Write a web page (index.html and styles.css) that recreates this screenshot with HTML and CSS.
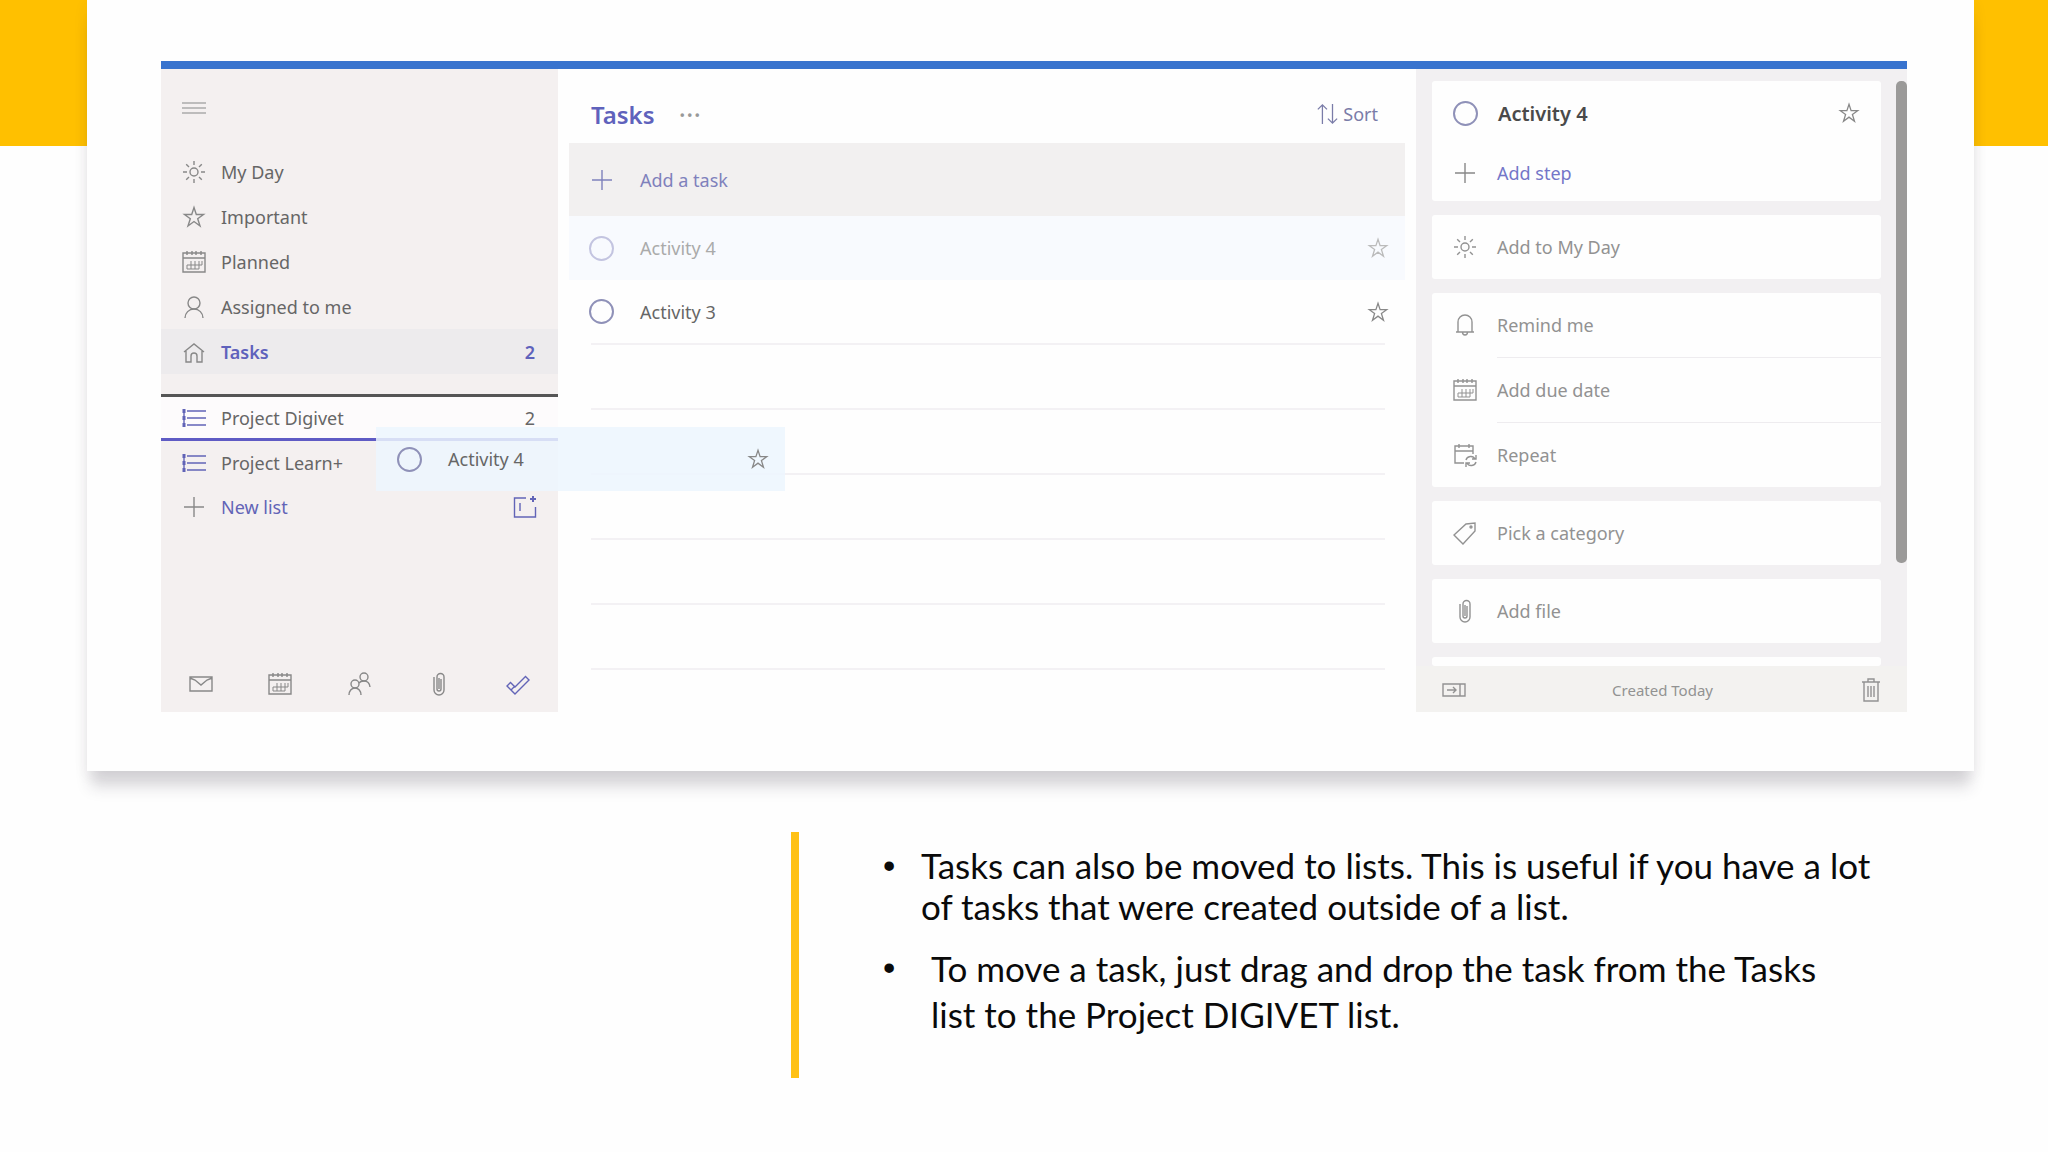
FILE: index.html
```html
<!DOCTYPE html>
<html lang="en">
<head>
    <meta charset="UTF-8">
    <meta name="viewport" content="width=device-width, initial-scale=1.0">
    <title>Moving tasks to a list</title>
    <link rel="stylesheet" href="styles.css">
</head>
<body>
    <svg class="symbols" aria-hidden="true">
        <symbol id="menu" viewBox="0 0 24 24"><path d="M0 7h24M0 12h24M0 17h24"/></symbol>
        <symbol id="sun" viewBox="0 0 24 24"><circle cx="12" cy="12" r="4"/><path d="M12 1v4M12 19v4M1 12h4M19 12h4M4.2 4.2L7 7M17 17l2.8 2.8M4.2 19.8L7 17M17 7l2.8-2.8"/></symbol>
        <symbol id="star" viewBox="0 0 24 24"><path d="M12 2.5l2.3 7h7.2l-5.8 4.2 2.3 7.3-6-4.5L6 21l2.3-7.3-5.8-4.2h7.2z"/></symbol>
        <symbol id="calendar" viewBox="0 0 24 24"><path d="M1 3h22v19H1zM1 8h22M5 1v4M10 1v4M14 1v4M19 1v4"/><path d="M5 15v4M9 11v8M13 11v8M17 11v8M20 11v4M5 15h15M5 19h12" stroke-width="1"/></symbol>
        <symbol id="person" viewBox="0 0 24 24"><circle cx="12" cy="8" r="6"/><path d="M3 23c0-5 4-9 9-9s9 4 9 9"/></symbol>
        <symbol id="home" viewBox="0 0 24 24"><path d="M2 12L12 4l10 8M4 11v11h5v-6a3 3 0 0 1 6 0v6h5V11"/></symbol>
        <symbol id="list" viewBox="0 0 24 24"><path d="M5 5h19M5 12h19M5 19h19"/><path d="M2 3v18" stroke-width="3" stroke-dasharray="4 3"/><path d="M2 3v18"/></symbol>
        <symbol id="plus" viewBox="0 0 24 24"><path d="M12 2v20M2 12h20"/></symbol>
        <symbol id="group" viewBox="0 0 24 24"><path d="M13 3H1.500v19h21V12M7 8v8"/><path d="M20 1v6M17 4h6" stroke-width="2"/></symbol>
        <symbol id="mail" viewBox="0 0 24 24"><path d="M1 5h22v14H1zM1 6l5 2 6 5 6-5 5-2"/></symbol>
        <symbol id="people" viewBox="0 0 24 24"><circle cx="7" cy="12" r="4"/><path d="M1 23c0-4 2.500-7 6-7s6 3 6 7"/><circle cx="16" cy="5" r="4"/><path d="M11 11c1-1.500 3-2 5-2 3.500 0 5.500 2 6 6"/></symbol>
        <symbol id="clip" viewBox="0 0 24 24"><path d="M14 7v10a2 2 0 0 1-4 0V5a3.500 3.500 0 0 1 7 0v13a5 5 0 0 1-10 0V5M12 6v11"/></symbol>
        <symbol id="check" viewBox="0 0 24 24"><path d="M1 14l3.500-3.500L9 15 19.500 4.500 23 8 9 22zM5 18l4-4"/></symbol>
        <symbol id="sort" viewBox="0 0 24 24"><path d="M7 23V2M2 7l5-5 5 5M18 1v21M13 17l5 5 5-5"/></symbol>
        <symbol id="bell" viewBox="0 0 24 24"><path d="M3 19h18M5 19V9a7 7 0 0 1 14 0v10M9.500 19a2.500 3 0 0 0 5 0"/></symbol>
        <symbol id="repeat" viewBox="0 0 24 24"><path d="M11 20H2V3h18v8M2 8h18M6 1v4M16 1v4"/><path d="M13 17c1-4 7-5 9-1M23 12v4h-4M23 19c-1 4-7 5-9 1M13 24v-4h4"/></symbol>
        <symbol id="tag" viewBox="0 0 24 24"><path d="M13 3l9-1v8L10 23 1 14z"/><circle cx="18" cy="6" r="1"/></symbol>
        <symbol id="hide" viewBox="0 0 24 24"><path d="M1 6h22v12H1zM18 6v12M5 12h9M11 9l3 3-3 3"/></symbol>
        <symbol id="trash" viewBox="0 0 24 24"><path d="M3 4h18M9 4V1h6v3M5 4v19h14V4M9 8v11M12 8v11M15 8v11"/></symbol>
    </svg>

    <section class="card">
        <div class="app">
            <nav class="sidebar">
                <button class="menu" aria-label="Menu"><svg class="icon"><use href="#menu"/></svg></button>
                <a class="nav-item" href="#"><svg class="icon"><use href="#sun"/></svg>My Day</a>
                <a class="nav-item" href="#"><svg class="icon"><use href="#star"/></svg>Important</a>
                <a class="nav-item" href="#"><svg class="icon"><use href="#calendar"/></svg>Planned</a>
                <a class="nav-item" href="#"><svg class="icon"><use href="#person"/></svg>Assigned to me</a>
                <a class="nav-item active" href="#"><svg class="icon"><use href="#home"/></svg>Tasks<span class="count">2</span></a>
                <div class="lists">
                    <a class="nav-item drop" href="#"><svg class="icon blue"><use href="#list"/></svg>Project Digivet<span class="count">2</span></a>
                    <a class="nav-item" href="#"><svg class="icon blue"><use href="#list"/></svg>Project Learn+</a>
                    <div class="new-list">
                        <button class="nav-item"><svg class="icon"><use href="#plus"/></svg>New list</button>
                        <button class="new-group" aria-label="New group"><svg class="icon blue"><use href="#group"/></svg></button>
                    </div>
                </div>
                <div class="switcher">
                    <a href="#" aria-label="Mail"><svg class="icon"><use href="#mail"/></svg></a>
                    <a href="#" aria-label="Calendar"><svg class="icon"><use href="#calendar"/></svg></a>
                    <a href="#" aria-label="People"><svg class="icon"><use href="#people"/></svg></a>
                    <a href="#" aria-label="Files"><svg class="icon"><use href="#clip"/></svg></a>
                    <a href="#" aria-label="To Do"><svg class="icon blue"><use href="#check"/></svg></a>
                </div>
            </nav>

            <main class="tasks">
                <header class="tasks-header">
                    <h1>Tasks</h1>
                    <button class="more" aria-label="More options">&middot;&middot;&middot;</button>
                    <button class="sort"><svg class="icon"><use href="#sort"/></svg>Sort</button>
                </header>
                <button class="add-task"><svg class="icon"><use href="#plus"/></svg>Add a task</button>
                <div class="task dragging">
                    <input type="checkbox" id="task4"><label for="task4">Activity 4</label>
                    <button class="fav" aria-label="Mark as important"><svg class="icon"><use href="#star"/></svg></button>
                </div>
                <div class="task">
                    <input type="checkbox" id="task3"><label for="task3">Activity 3</label>
                    <button class="fav" aria-label="Mark as important"><svg class="icon"><use href="#star"/></svg></button>
                </div>
                <div class="line"></div>
                <div class="line"></div>
                <div class="line"></div>
                <div class="line"></div>
                <div class="line"></div>
            </main>

            <aside class="detail">
                <div class="detail-scroll">
                    <div class="panels">
                        <div class="panel first">
                            <div class="row title">
                                <input type="checkbox" id="detail4"><label for="detail4">Activity 4</label>
                                <button class="fav" aria-label="Mark as important"><svg class="icon"><use href="#star"/></svg></button>
                            </div>
                            <button class="row step"><svg class="icon"><use href="#plus"/></svg>Add step</button>
                        </div>
                        <div class="panel"><button class="row"><svg class="icon"><use href="#sun"/></svg>Add to My Day</button></div>
                        <div class="panel">
                            <button class="row"><svg class="icon"><use href="#bell"/></svg>Remind me</button>
                            <hr>
                            <button class="row"><svg class="icon"><use href="#calendar"/></svg>Add due date</button>
                            <hr>
                            <button class="row"><svg class="icon"><use href="#repeat"/></svg>Repeat</button>
                        </div>
                        <div class="panel"><button class="row"><svg class="icon"><use href="#tag"/></svg>Pick a category</button></div>
                        <div class="panel"><button class="row"><svg class="icon"><use href="#clip"/></svg>Add file</button></div>
                        <div class="panel cut"></div>
                    </div>
                    <div class="scrollbar"></div>
                </div>
                <footer class="detail-footer">
                    <button aria-label="Hide details"><svg class="icon"><use href="#hide"/></svg></button>
                    <span>Created Today</span>
                    <button aria-label="Delete task"><svg class="icon"><use href="#trash"/></svg></button>
                </footer>
            </aside>

            <!-- the task being dragged onto the list -->
            <div class="ghost">
                <input type="checkbox" id="ghost4"><label for="ghost4">Activity 4</label>
                <button class="fav" aria-label="Mark as important"><svg class="icon"><use href="#star"/></svg></button>
            </div>
        </div>
    </section>

    <section class="notes">
        <ul>
            <li>Tasks can also be moved to lists. This is useful if you have a lot of tasks that were created outside of a list.</li>
            <li class="second">To move a task, just drag and drop the task from the Tasks list to the Project DIGIVET list.</li>
        </ul>
    </section>
</body>
</html>
```
FILE: styles.css
```css
* {
    box-sizing: border-box;
}
body {
    margin: 0;
    background: #fefefe linear-gradient(#ffc000, #ffc000) no-repeat;
    background-size: 100% 146px;
    font-family: "Noto Sans", "Open Sans", sans-serif;
    font-size: 18px;
    color: #666;
}
.symbols {
    position: absolute;
    width: 0;
    height: 0;
}
.icon {
    display: block;
    flex: none;
    width: 24px;
    height: 24px;
    fill: none;
    stroke: currentColor;
    stroke-width: 1.4;
}
button {
    padding: 0;
    border: 0;
    background: none;
    font: inherit;
    color: inherit;
    text-align: left;
}
a {
    color: inherit;
    text-decoration: none;
}
input[type="checkbox"] {
    appearance: none;
    flex: none;
    width: 25px;
    height: 25px;
    margin: 0;
    border: 2px solid #8f91b8;
    border-radius: 50%;
}
.fav {
    margin-left: auto;
    color: #888;
}
.fav .icon {
    width: 22px;
    height: 22px;
}
.blue {
    color: #6264b7;
}
.card {
    margin: 0 74px 0 87px;
    padding: 61px 67px 59px 74px;
    background: #fefefe;
    box-shadow: 0 20px 14px -4px rgba(50, 40, 60, 0.17), 0 4px 14px rgba(50, 40, 60, 0.07);
}
.app {
    position: relative;
    display: grid;
    grid-template-columns: 397px 1fr 491px;
    border-top: 8px solid #3873ce;
}

/* left navigation */
.sidebar {
    display: flex;
    flex-direction: column;
    background: #f4f0f0;
}
.menu {
    margin: 27px 21px 29px;
    color: #aaa;
}
.nav-item {
    display: flex;
    align-items: center;
    gap: 15px;
    height: 45px;
    padding: 0 23px 0 21px;
}
.nav-item .icon {
    color: #888;
}
.nav-item .blue {
    color: #6264b7;
}
.count {
    margin-left: auto;
}
.active {
    background: #edebed;
    color: #5f62bc;
    font-weight: 600;
}
.lists {
    margin-top: 20px;
    border-top: 3px solid #555;
}
.lists .drop {
    height: 46px;
    background: #fdfbfc;
    border-bottom: 3px solid #5f5bc4;
}
.lists .nav-item {
    height: 44px;
}
.new-list {
    display: flex;
    align-items: center;
    justify-content: space-between;
    padding-right: 21px;
    height: 44px;
    color: #6264b7;
}
.switcher {
    display: flex;
    justify-content: space-between;
    margin-top: auto;
    padding: 0 28px 16px;
    color: #888;
}

/* task list */
.tasks {
    padding: 0 11px;
}
.tasks-header {
    display: flex;
    align-items: center;
    height: 74px;
    padding: 16px 27px 0 22px;
}
h1 {
    margin: 0;
    font-size: 24px;
    font-weight: 600;
    color: #5f62bc;
}
.more {
    margin-left: 24px;
    font-size: 28px;
    line-height: 28px;
    color: #999;
}
.sort {
    display: flex;
    align-items: center;
    gap: 5px;
    margin-left: auto;
    color: #7a7ca8;
}
.sort .icon {
    width: 22px;
    height: 22px;
}
.add-task {
    display: flex;
    align-items: center;
    gap: 26px;
    width: 100%;
    height: 73px;
    padding: 0 21px;
    background: #f2f0f0;
    color: #7f81bc;
}
.task {
    display: flex;
    align-items: center;
    gap: 26px;
    height: 65px;
    margin: 0 20px 0 22px;
    border-bottom: 2px solid #f3f1f4;
    color: #666;
}
.task input {
    margin-left: -2px;
}
.task .fav {
    margin-right: -4px;
}
.dragging {
    height: 64px;
    margin: 0;
    padding: 0 16px 0 22px;
    border: 0;
    background: #f8fafe;
    color: #aaa;
}
.dragging input {
    border-color: #c3c4e0;
}
.dragging .fav {
    margin-right: 0;
    color: #bbb;
}
.line {
    height: 65px;
    margin: 0 20px 0 22px;
    border-bottom: 2px solid #f3f1f4;
}

/* task details */
.detail {
    display: flex;
    flex-direction: column;
    background: #f2f0f2;
    color: #929292;
}
.detail-scroll {
    display: flex;
    gap: 15px;
    padding: 12px 0 0 16px;
}
.panels {
    display: flex;
    flex: 1;
    flex-direction: column;
    gap: 14px;
}
.panel {
    border-radius: 3px;
    background: #fefefe;
}
.row {
    display: flex;
    align-items: center;
    gap: 20px;
    width: 100%;
    height: 64px;
    padding: 0 21px;
}
.title {
    color: #4a4a4a;
    font-size: 20px;
    font-weight: 600;
}
.step {
    height: 56px;
    color: #7476c8;
}
.step .icon {
    color: #888;
}
hr {
    height: 1px;
    margin: 0 0 0 65px;
    border: 0;
    background: #eeecef;
}
.cut {
    height: 9px;
}
.scrollbar {
    width: 11px;
    height: 482px;
    border-radius: 5px;
    background: #9b9a99;
}
.detail-footer {
    display: flex;
    align-items: center;
    justify-content: space-between;
    height: 46px;
    padding: 2px 24px 0 26px;
    background: #f3f2f0;
    font-size: 15px;
}

/* dragged copy */
.ghost {
    position: absolute;
    top: 358px;
    left: 215px;
    display: flex;
    align-items: center;
    gap: 26px;
    width: 409px;
    height: 64px;
    padding: 0 16px 0 21px;
    background: rgba(236, 246, 254, 0.85);
}

/* text under the card */
.notes {
    margin: 61px 150px 0 791px;
    padding: 13px 0 0 84px;
    border-left: 8px solid #ffc114;
    min-height: 246px;
    font-family: Lato, "Open Sans", sans-serif;
    font-size: 35px;
    line-height: 41px;
    color: #0a0a0a;
}
ul {
    margin: 0;
    padding: 0;
    list-style: none;
}
li {
    display: grid;
    grid-template-columns: 38px 1fr;
}
li::before {
    content: "•";
    font-family: "Liberation Sans", sans-serif;
}
.second {
    grid-template-columns: 48px 1fr;
    margin-top: 18px;
    padding-right: 40px;
    line-height: 46px;
}
```
